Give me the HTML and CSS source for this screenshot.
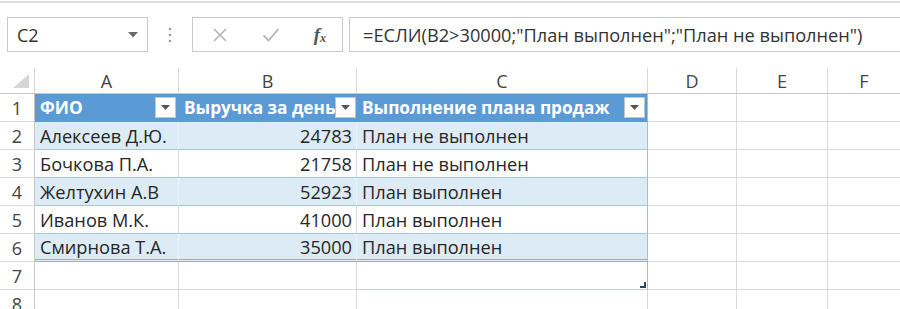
FILE: index.html
```html
<!DOCTYPE html>
<html lang="ru">
<head>
<meta charset="utf-8">
<title>Excel</title>
<link rel="stylesheet" href="styles.css">
</head>
<body>
<div class="app">
  <div class="topline"></div>
  <div class="formulabar">
    <div class="namebox">
      <span class="ref">C2</span>
      <svg class="nb-arrow" width="10" height="6" viewBox="0 0 10 6"><path d="M0 0H10L5 5.5Z" fill="#6a6a6a"/></svg>
    </div>
    <div class="dots">
      <svg width="4" height="16" viewBox="0 0 4 16"><circle cx="2" cy="2" r="1.3" fill="#9a9a9a"/><circle cx="2" cy="8" r="1.3" fill="#9a9a9a"/><circle cx="2" cy="14" r="1.3" fill="#9a9a9a"/></svg>
    </div>
    <div class="btnbox">
      <svg class="ico" width="16" height="16" viewBox="0 0 16 16"><path d="M2 2L14 14M14 2L2 14" stroke="#b4b4b4" stroke-width="1.6" fill="none"/></svg>
      <svg class="ico" width="18" height="16" viewBox="0 0 18 16"><path d="M1.5 8.5L6.5 13.5L16.5 2" stroke="#b4b4b4" stroke-width="1.8" fill="none"/></svg>
      <span class="fx">f<sub>x</sub></span>
    </div>
    <div class="formula">=ЕСЛИ(B2&gt;30000;"План выполнен";"План не выполнен")</div>
  </div>

  <div class="sheet">
    <div class="corner"><svg width="16" height="14" viewBox="0 0 16 14"><path d="M16 0V14H0Z" fill="#d6d6d6"/></svg></div>
    <div class="colh">A</div>
    <div class="colh">B</div>
    <div class="colh">C</div>
    <div class="colh">D</div>
    <div class="colh">E</div>
    <div class="colh last">F</div>

    <div class="rowh">1</div>
    <div class="c th"><span>ФИО</span><span class="dd"><svg width="9" height="5" viewBox="0 0 9 5"><path d="M0 0H9L4.5 5Z" fill="#555"/></svg></span></div>
    <div class="c th"><span>Выручка за день</span><span class="dd"><svg width="9" height="5" viewBox="0 0 9 5"><path d="M0 0H9L4.5 5Z" fill="#555"/></svg></span></div>
    <div class="c th tr"><span>Выполнение плана продаж</span><span class="dd"><svg width="9" height="5" viewBox="0 0 9 5"><path d="M0 0H9L4.5 5Z" fill="#555"/></svg></span></div>
    <div class="c"></div><div class="c"></div><div class="c last"></div>

    <div class="rowh">2</div>
    <div class="c band">Алексеев Д.Ю.</div>
    <div class="c band num">24783</div>
    <div class="c band tr">План не выполнен</div>
    <div class="c"></div><div class="c"></div><div class="c last"></div>

    <div class="rowh">3</div>
    <div class="c plain">Бочкова П.А.</div>
    <div class="c plain num">21758</div>
    <div class="c plain tr">План не выполнен</div>
    <div class="c"></div><div class="c"></div><div class="c last"></div>

    <div class="rowh">4</div>
    <div class="c band">Желтухин А.В</div>
    <div class="c band num">52923</div>
    <div class="c band tr">План выполнен</div>
    <div class="c"></div><div class="c"></div><div class="c last"></div>

    <div class="rowh">5</div>
    <div class="c plain">Иванов М.К.</div>
    <div class="c plain num">41000</div>
    <div class="c plain tr">План выполнен</div>
    <div class="c"></div><div class="c"></div><div class="c last"></div>

    <div class="rowh">6</div>
    <div class="c band endrow">Смирнова Т.А.</div>
    <div class="c band endrow num">35000</div>
    <div class="c band endrow tr">План выполнен</div>
    <div class="c"></div><div class="c"></div><div class="c last"></div>

    <div class="rowh">7</div>
    <div class="c"></div>
    <div class="c"></div>
    <div class="c tr handle-cell"><svg class="handle" width="6" height="6" viewBox="0 0 6 6"><path d="M6 0V6H0V4H4V0Z" fill="#2f3f6f"/></svg></div>
    <div class="c"></div><div class="c"></div><div class="c last"></div>

    <div class="rowh">8</div>
    <div class="c"></div><div class="c"></div><div class="c"></div>
    <div class="c"></div><div class="c"></div><div class="c last"></div>
  </div>
</div>
</body>
</html>
```

FILE: styles.css
```css
* { box-sizing: border-box; }
html, body { margin: 0; padding: 0; background: #ffffff; }
body {
  font-family: "Open Sans", "Noto Sans", sans-serif;
  color: #262626;
  overflow: hidden;
}
.app { width: 900px; height: 309px; overflow: hidden; }

.topline { height: 2px; margin-top: 1px; background: #dcdcdc; }

.formulabar {
  display: flex;
  align-items: stretch;
  height: 35px;
  margin-top: 14px;
  margin-bottom: 16px;
}
.namebox {
  width: 141px;
  margin-left: 7px;
  border: 1px solid #c8c8c8;
  display: flex;
  align-items: center;
  justify-content: space-between;
  padding: 0 9px 0 9px;
  font-size: 18px;
  color: #333;
}
.dots {
  width: 44px;
  display: flex;
  align-items: center;
  justify-content: center;
}
.btnbox {
  width: 151px;
  border: 1px solid #c8c8c8;
  display: flex;
  align-items: center;
  padding: 0 16px 0 19px;
  justify-content: space-between;
}
.fx {
  font-family: "Liberation Serif", "DejaVu Serif", serif;
  font-style: italic;
  font-weight: bold;
  font-size: 19px;
  color: #555;
  line-height: 1;
}
.fx sub { font-size: 12px; vertical-align: -1px; }
.formula {
  flex: 1;
  margin-left: 6px;
  border: 1px solid #c8c8c8;
  border-right: none;
  display: flex;
  align-items: center;
  padding-left: 13px;
  font-size: 18.2px;
  color: #333;
  white-space: nowrap;
}

.sheet {
  display: grid;
  grid-template-columns: 35px 144px 178px 291px 89px 91px 1fr;
  grid-template-rows: 26px repeat(8, 28px);
  font-size: 18.2px;
}
.corner {
  border-right: 1px solid #d4d4d4;
  border-bottom: 1px solid #c6c6c6;
  display: flex;
  align-items: flex-end;
  justify-content: flex-end;
  padding: 0 5px 5px 0;
}
.colh {
  border-right: 1px solid #dadada;
  border-bottom: 1px solid #c6c6c6;
  display: flex;
  align-items: center;
  justify-content: center;
  color: #444;
  font-size: 18px;
}
.rowh {
  border-right: 1px solid #c6c6c6;
  border-bottom: 1px solid #dadada;
  display: flex;
  align-items: center;
  justify-content: center;
  color: #444;
  font-size: 18px;
}
.c {
  border-right: 1px solid #dadada;
  border-bottom: 1px solid #dadada;
  display: flex;
  align-items: center;
  padding: 0 4px 0 5px;
  white-space: nowrap;
  overflow: hidden;
}
.last { border-right: none; }

.th {
  background: #5b9bd5;
  color: #ffffff;
  font-weight: bold;
  font-size: 17.2px;
  justify-content: space-between;
  padding-right: 2px;
  border-right-color: #5b9bd5;
  border-bottom-color: #5b9bd5;
}
.dd {
  width: 21px;
  height: 21px;
  flex: none;
  background: #fff;
  border: 1px solid #c4c4c4;
  display: flex;
  align-items: center;
  justify-content: center;
}
.band {
  background: #ddebf7;
  border-right-color: #ecf3fa;
  border-bottom-color: #a8c4e0;
}
.plain {
  border-bottom-color: #a8c4e0;
}
.num { justify-content: flex-end; }
.tr { border-right-color: #a8bdd6; }
.endrow { border-bottom: 3px double #8eb0d6; }
.handle-cell { position: relative; border-bottom-color: #c8cfd8; }
.handle { position: absolute; right: 1px; bottom: 1px; }
```
